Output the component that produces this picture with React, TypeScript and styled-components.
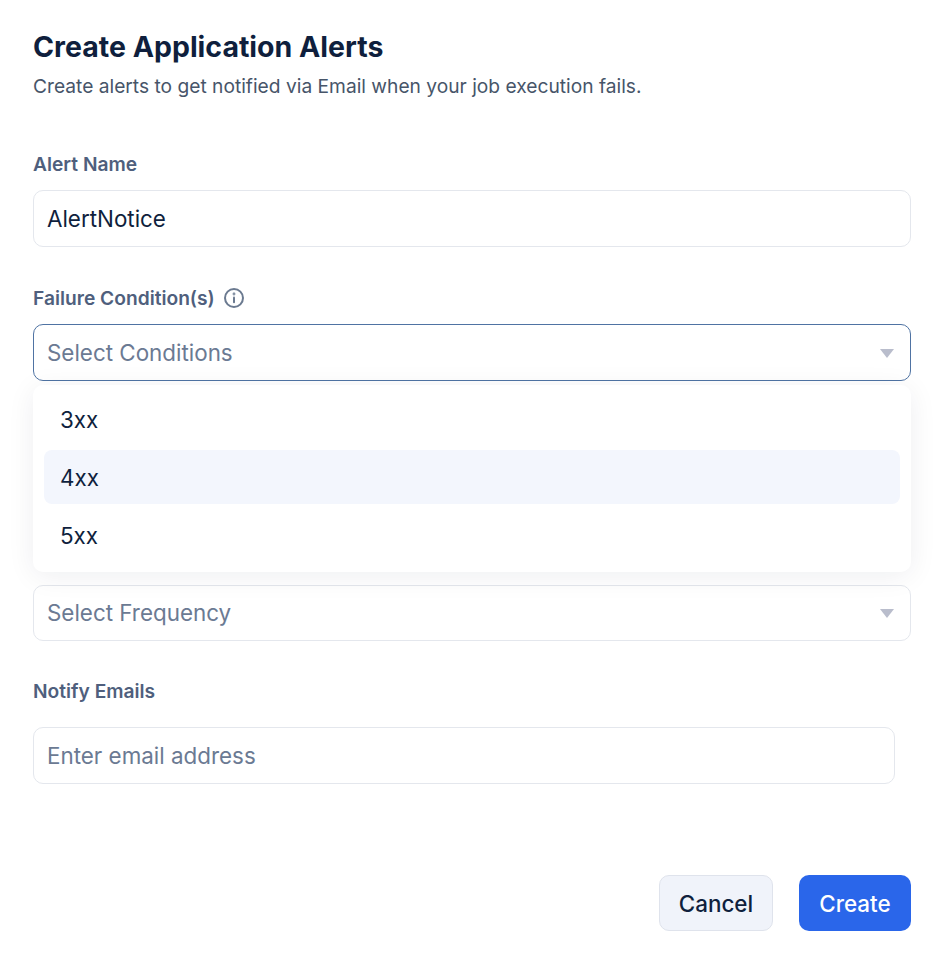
import React from 'react';
import styled, { createGlobalStyle } from 'styled-components';

const GlobalStyle = createGlobalStyle`
  html, body {
    margin: 0;
    padding: 0;
    background: #fff;
  }
  body {
    font-family: Inter, "Liberation Sans", sans-serif;
  }
  * {
    box-sizing: border-box;
  }
`;

const conditions = ['3xx', '4xx', '5xx'];

export default function App() {
  return (
    <Page>
      <GlobalStyle />
      <Title>Create Application Alerts</Title>
      <Subtitle>Create alerts to get notified via Email when your job execution fails.</Subtitle>

      <Field>
        <Label>Alert Name</Label>
        <Input>
          <Value>AlertNotice</Value>
        </Input>
      </Field>

      <ConditionField>
        <Label>
          Failure Condition(s)
          <svg width="22" height="22" viewBox="0 0 22 22" fill="none" stroke="#6b7a90" strokeWidth="2">
            <circle cx="11" cy="11" r="9" />
            <path d="M11 10.4v4.8" strokeLinecap="round" />
            <circle cx="11" cy="7" r="0.4" fill="#6b7a90" />
          </svg>
        </Label>
        <Input $focused>
          <Placeholder>Select Conditions</Placeholder>
          <Caret />
        </Input>
        <Menu>
          {conditions.map((c) => (
            <Option key={c} $active={c === '4xx'}>
              {c}
            </Option>
          ))}
        </Menu>
      </ConditionField>

      <FrequencyInput>
        <Placeholder>Select Frequency</Placeholder>
        <Caret />
      </FrequencyInput>

      <EmailField>
        <EmailLabel>Notify Emails</EmailLabel>
        <EmailInput>
          <Placeholder>Enter email address</Placeholder>
        </EmailInput>
      </EmailField>

      <Footer>
        <CancelButton>Cancel</CancelButton>
        <CreateButton>Create</CreateButton>
      </Footer>
    </Page>
  );
}

const Page = styled.div`
  width: 942px;
  height: 954px;
  padding: 30px 31px 0 33px;
  overflow: hidden;
  background: #fff;
`;

const Title = styled.h1`
  margin: 0;
  font-size: 28.5px;
  line-height: 34px;
  font-weight: 700;
  color: #0f1f3d;
`;

const Subtitle = styled.p`
  margin: 8px 0 0;
  font-size: 19.2px;
  line-height: 28px;
  color: #475569;
`;

const Field = styled.div`
  margin-top: 52px;
`;

const ConditionField = styled.div`
  margin-top: 39px;
`;

const EmailField = styled.div`
  margin-top: 38px;
`;

const Label = styled.label`
  display: flex;
  align-items: center;
  gap: 8px;
  height: 24px;
  margin-bottom: 14px;
  font-size: 19.2px;
  font-weight: 600;
  color: #4f5f7d;
`;

const EmailLabel = styled(Label)`
  margin-bottom: 24px;
`;

const Input = styled.div<{ $focused?: boolean }>`
  display: flex;
  align-items: center;
  justify-content: space-between;
  height: 57px;
  padding: 0 13px 1px;
  border: 1px solid ${({ $focused }) => ($focused ? '#4f73a3' : '#e4e7ed')};
  border-radius: 10px;
  background: #fff;
  font-size: 22.4px;
`;

const FrequencyInput = styled(Input)`
  height: 56px;
`;

const EmailInput = styled(Input)`
  width: 862px;
`;

const Value = styled.span`
  color: #0f1f3d;
`;

const Placeholder = styled.span`
  color: #6b7a93;
`;

const Caret = styled.span`
  width: 0;
  height: 0;
  margin-top: 2px;
  margin-right: 3px;
  border-left: 7px solid transparent;
  border-right: 7px solid transparent;
  border-top: 9px solid #b9bdcc;
`;

const Menu = styled.div`
  position: relative;
  z-index: 1;
  height: 187px;
  margin: 4px 0 13px;
  padding: 7px 11px 10px;
  border-radius: 10px;
  background: #fff;
  box-shadow: 0 4px 28px rgba(15, 31, 61, 0.07);
`;

const Option = styled.div<{ $active?: boolean }>`
  display: flex;
  align-items: center;
  height: 54px;
  margin-bottom: 4px;
  padding: 1px 16px 0;
  border-radius: 8px;
  background: ${({ $active }) => ($active ? '#f3f6fd' : 'transparent')};
  font-size: 22.4px;
  color: #0f1f3d;
`;

const Footer = styled.div`
  display: flex;
  justify-content: flex-end;
  gap: 26px;
  margin-top: 91px;
`;

const CancelButton = styled.button`
  width: 114px;
  height: 56px;
  padding-bottom: 1px;
  border: 1px solid #dfe3ec;
  border-radius: 10px;
  background: #f0f3fa;
  font-family: inherit;
  font-size: 22.4px;
  font-weight: 500;
  color: #0f1f3d;
`;

const CreateButton = styled.button`
  width: 112px;
  height: 56px;
  padding-bottom: 1px;
  border: none;
  border-radius: 10px;
  background: #2a66ea;
  font-family: inherit;
  font-size: 22.4px;
  font-weight: 500;
  color: #fff;
`;
